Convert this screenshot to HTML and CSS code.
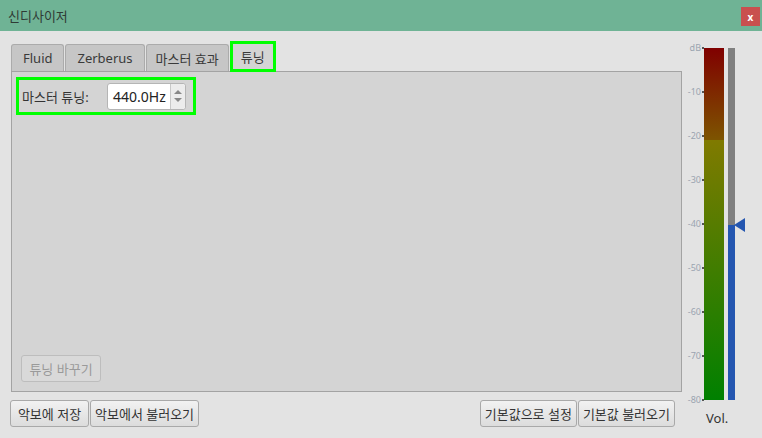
FILE: index.html
```html
<!DOCTYPE html>
<html lang="ko">
  <head>
    <meta charset="UTF-8" />
    <title>신디사이저</title>
    <link rel="stylesheet" href="styles.css">
  </head>
  <body>
    <div class="titlebar">
      <span class="title">신디사이저</span>
      <span class="close">x</span>
    </div>
    <div class="main">
      <div class="left">
        <div class="tabs">
          <div class="tab">Fluid</div>
          <div class="tab">Zerberus</div>
          <div class="tab narrow">마스터 효과</div>
          <div class="tab selected">튜닝</div>
        </div>
        <div class="panel">
          <div class="tuning">
            <span class="tuning-label">마스터 튜닝:</span>
            <div class="spin">
              <span class="spin-value">440.0Hz</span>
              <span class="spin-arrows">
                <span class="arrow up"></span>
                <span class="arrow down"></span>
              </span>
            </div>
          </div>
          <button class="btn disabled change">튜닝 바꾸기</button>
        </div>
        <div class="actions">
          <button class="btn">악보에 저장</button>
          <button class="btn">악보에서 불러오기</button>
          <span class="spacer"></span>
          <button class="btn">기본값으로 설정</button>
          <button class="btn">기본값 불러오기</button>
        </div>
      </div>
      <div class="meter">
        <div class="meter-body">
          <div class="scale">
            <span>dB</span>
            <span>-10</span>
            <span>-20</span>
            <span>-30</span>
            <span>-40</span>
            <span>-50</span>
            <span>-60</span>
            <span>-70</span>
            <span>-80</span>
          </div>
          <div class="level"></div>
          <div class="track">
            <div class="fill" style="height: 49.6%"></div>
            <svg class="pointer" width="11" height="14" viewBox="0 0 11 14"><polygon points="0,7 11,0 11,14" fill="#2456b0"/></svg>
          </div>
        </div>
        <div class="vol">Vol.</div>
      </div>
    </div>
  </body>
</html>
```

FILE: styles.css
```css
body {
  margin: 0;
  width: 762px;
  height: 438px;
  background: #e3e3e3;
  font-family: "Noto Sans", "Noto Sans CJK KR", sans-serif;
  font-size: 13px;
  color: #333;
  overflow: hidden;
}
.titlebar {
  height: 31px;
  background: #6fb395;
  display: flex;
  align-items: center;
  padding: 0 2px 0 8px;
}
.title {
  color: #2f3b35;
}
.close {
  margin-left: auto;
  width: 19px;
  height: 19px;
  margin-top: 2px;
  background: #c9504f;
  color: white;
  font-weight: bold;
  font-size: 10px;
  display: flex;
  align-items: center;
  justify-content: center;
}
.main {
  display: flex;
}
.left {
  margin-left: 11px;
  width: 671px;
  padding-top: 10px;
}
.tabs {
  display: flex;
  align-items: flex-end;
  height: 30px;
}
.tab {
  height: 27px;
  box-sizing: border-box;
  padding: 0 11px;
  margin-right: 1px;
  background: #c6c6c6;
  border: 1px solid #ababab;
  border-bottom: none;
  border-radius: 3px 3px 0 0;
  display: flex;
  align-items: center;
  color: #3a3a3a;
}
.tab.narrow {
  padding: 0 9px;
}
.tab.selected {
  height: 31px;
  margin-bottom: -1px;
  padding: 0 8px;
  background: #d4d4d4;
  border: 3px solid #00ff00;
  border-radius: 0;
}
.panel {
  height: 321px;
  box-sizing: border-box;
  border: 1px solid #a3a3a3;
  background: #d4d4d4;
  display: flex;
  flex-direction: column;
  align-items: flex-start;
  padding: 5px 0 9px 4px;
}
.tuning {
  width: 180px;
  height: 38px;
  box-sizing: border-box;
  border: 3px solid #00ff00;
  display: flex;
  align-items: center;
  padding: 0 3px;
}
.tuning-label {
  width: 85px;
}
.spin {
  width: 79px;
  height: 27px;
  box-sizing: border-box;
  border: 1px solid #b5b5b5;
  border-radius: 3px;
  background: white;
  display: flex;
  align-items: center;
}
.spin-value {
  flex: 1;
  padding-left: 5px;
  font-size: 14px;
  color: #222;
}
.spin-arrows {
  width: 14px;
  height: 100%;
  border-left: 1px solid #c8c8c8;
  background: #ececec;
  border-radius: 0 3px 3px 0;
  display: flex;
  flex-direction: column;
  align-items: center;
  justify-content: center;
  gap: 4px;
}
.arrow {
  width: 0;
  height: 0;
  border-left: 4px solid transparent;
  border-right: 4px solid transparent;
}
.arrow.up {
  border-bottom: 4px solid #888;
}
.arrow.down {
  border-top: 4px solid #888;
}
.btn {
  height: 27px;
  min-width: 79px;
  padding: 0 4px;
  font-family: inherit;
  font-size: 13px;
  color: #333;
  background: linear-gradient(#f2f2f2, #dcdcdc);
  border: 1px solid #a9a9a9;
  border-radius: 3px;
  margin: 0;
}
.btn.disabled {
  color: #9a9a9a;
  background: #d9d9d9;
  border-color: #bdbdbd;
}
.change {
  margin-top: auto;
  margin-left: 5px;
  width: 80px;
}
.actions {
  display: flex;
  gap: 1px;
  margin-top: 8px;
  margin-left: -1px;
}
.spacer {
  flex: 1;
}
.actions .btn:last-child {
  margin-right: 7px;
}
.meter {
  margin-left: 4px;
  width: 70px;
  display: flex;
  flex-direction: column;
}
.meter-body {
  display: flex;
  margin-top: 17px;
  height: 352px;
}
.scale {
  width: 18px;
  margin-top: -5px;
  height: 362px;
  display: flex;
  flex-direction: column;
  justify-content: space-between;
  align-items: flex-end;
  font-size: 9px;
  line-height: 10px;
  color: #9aa3b0;
}
.scale span {
  display: flex;
  align-items: center;
}
.scale span::after {
  content: "";
  width: 2px;
  height: 2px;
  margin-left: 1px;
  background: #555;
}
.level {
  width: 20px;
  background: linear-gradient(#800000 0%, #7d5400 26%, #807a00 26.2%, #008000 100%);
}
.track {
  width: 7px;
  margin-left: 4px;
  background: #808080;
  position: relative;
  display: flex;
  align-items: flex-end;
}
.fill {
  width: 100%;
  background: #2456b0;
}
.pointer {
  position: absolute;
  left: 6px;
  top: 170px;
}
.vol {
  margin-top: 9px;
  margin-left: 20px;
  font-size: 13px;
  color: #333;
}
```
